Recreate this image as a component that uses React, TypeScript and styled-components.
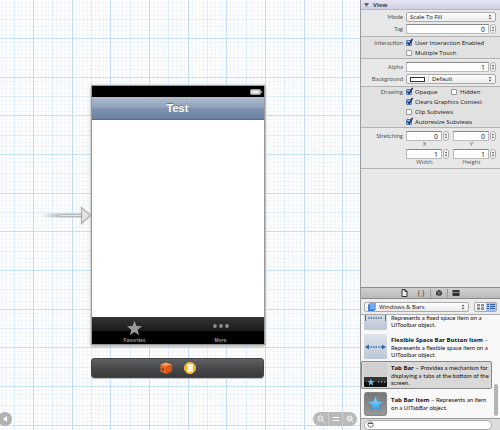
import React, { useState } from "react";
import styled, { createGlobalStyle, css } from "styled-components";

const Global = createGlobalStyle`
  * { box-sizing: border-box; }
  body { margin: 0; font-family: "Open Sans", "Noto Sans", sans-serif; font-size: 6px; line-height: 8px; color: #111; background: #fff; }
  button, input, select { font: inherit; color: inherit; margin: 0; padding: 0; border: 0; }
  p { margin: 0; }
`;

const TILE = 116;

/* Draws `count` evenly spread one-pixel lines across a tile, snapped to whole pixels. */
const rule = (direction: string, count: number, color: string) => {
  const stops: string[] = [];
  for (let i = 0; i < count; i += 1) {
    const at = Math.round((i * TILE) / count);
    const next = Math.round(((i + 1) * TILE) / count);
    stops.push(`${color} ${at}px ${at + 1}px`, `transparent ${at + 1}px ${next}px`);
  }
  return `linear-gradient(${direction}, ${stops.join(", ")})`;
};

const GRID = [
  rule("90deg", 3, "#c3dbf7"),
  rule("180deg", 3, "#c3e0f9"),
  rule("90deg", 6, "#dfebfb"),
  rule("180deg", 6, "#dff0fc"),
  rule("90deg", 30, "#f1f6fd"),
  rule("180deg", 30, "#f1f7fd"),
].join(", ");

const Window = styled.div`
  display: flex;
  height: 100vh;
  min-height: 430px;
  overflow: hidden;
`;

const Canvas = styled.main`
  position: relative;
  flex: 1;
  min-width: 0;
  display: flex;
  flex-direction: column;
  align-items: center;
  padding: 85px 5px 0 0;
  background-color: #fff;
  background-image: ${GRID};
  background-size: ${TILE}px ${TILE}px;
  background-position: 33px 38px;
`;

const DeviceRow = styled.div`
  position: relative;
`;

const Phone = styled.section`
  display: flex;
  flex-direction: column;
  width: 174px;
  border: 1px solid #999;
  background: #fff;
  box-shadow: 0 1px 3px #999;
`;

const StatusBar = styled.div`
  display: flex;
  justify-content: flex-end;
  align-items: center;
  height: 11px;
  padding-right: 2px;
  background: #000;
`;

const NavTitle = styled.h1`
  margin: 0;
  height: 23px;
  font: bold 11px/23px "Liberation Sans", Arial, sans-serif;
  text-align: center;
  color: #fff;
  text-shadow: 0 -1px 0 #64748c;
  background: linear-gradient(#b1bfd0, #8da0b9 50%, #8094b0 51%, #6b82a3);
  border-bottom: 1px solid #53698a;
`;

const Content = styled.div`
  height: 197px;
`;

const TabBar = styled.nav`
  display: flex;
  height: 27px;
  background: linear-gradient(#343434, #1b1b1b 50%, #000 51%);
`;

const Tab = styled.button`
  flex: 1;
  display: flex;
  flex-direction: column;
  align-items: center;
  justify-content: space-between;
  padding: 3px 0 0;
  font: bold 5px/8px "Liberation Sans", Arial, sans-serif;
  color: #999;
  background: none;
`;

const Dock = styled.div`
  display: flex;
  align-items: center;
  justify-content: center;
  gap: 10px;
  width: 173px;
  height: 20px;
  margin-top: 13px;
  border: 1px solid #444;
  border-radius: 3px;
  background: linear-gradient(#606163, #48494b 50%, #38393b);
  box-shadow: 0 1px 1px #bbb;
`;

const EntryArrow = styled.svg`
  position: absolute;
  right: 100%;
  top: 121px;
  margin-right: -1px;
`;

const ZoomControls = styled.div`
  position: absolute;
  right: 3px;
  bottom: 4px;
  display: flex;
  height: 14px;
  padding: 0 1px;
  border-radius: 7px;
  background: #b9b9b9;
`;

const ZoomButton = styled.button`
  display: grid;
  place-items: center;
  width: 14px;
  background: none;
  & + & { border-left: 1px solid #cbcbcb; }
`;

const BackButton = styled.button`
  position: absolute;
  left: -2px;
  bottom: 4px;
  display: grid;
  place-items: center;
  width: 14px;
  height: 14px;
  border-radius: 50%;
  background: #b2b2b2;
`;

const Sidebar = styled.aside`
  display: flex;
  flex-direction: column;
  width: 140px;
  border-left: 1px solid #999;
  background: #e8e8e8;
`;

const PanelHeader = styled.button`
  display: flex;
  align-items: center;
  gap: 4px;
  height: 10px;
  padding-left: 3px;
  font-weight: 700;
  color: #444;
  text-align: left;
  background: linear-gradient(#e6e6f4, #cfcfe3);
  border-bottom: 1px solid #b5b5c3;
`;

const Group = styled.div<{ $gap?: number; $pad?: string; $shade?: boolean }>`
  display: grid;
  grid-template-columns: 42px 1fr;
  column-gap: 3px;
  row-gap: ${(p) => p.$gap ?? 2}px;
  padding: ${(p) => p.$pad ?? "2px 4px 2px 0"};
  border-bottom: 1px solid #b2b2b2;
  background: ${(p) => (p.$shade ? "#e1e1e1" : "none")};
`;

const Label = styled.label`
  grid-column: 1;
  line-height: 10px;
  font-family: Lato, "Open Sans", sans-serif;
  color: #555;
  text-align: right;
`;

const Field = styled.div`
  grid-column: 2;
  display: flex;
  align-items: center;
  min-width: 0;
  height: 10px;
`;

const popupLook = css`
  border: 1px solid #aaa;
  border-radius: 2px;
  background: linear-gradient(#fff, #f4f4f4 50%, #ececec);
`;

const Popup = styled.div`
  ${popupLook}
  flex: 1;
  display: flex;
  align-items: center;
  gap: 3px;
  min-width: 0;
  height: 10px;
  padding: 0 3px;
`;

const Select = styled.select`
  flex: 1;
  min-width: 0;
  height: 8px;
  line-height: 8px;
  appearance: none;
  background: none;
  outline: none;
`;

const Swatch = styled.span`
  width: 15px;
  height: 5px;
  border: 1px solid #333;
  background: #fff;
`;

const Divider = styled.span`
  width: 1px;
  height: 6px;
  background: #ccc;
`;

const NumberBox = styled.input`
  flex: 1;
  min-width: 0;
  width: 10px;
  height: 10px;
  padding-right: 3px;
  font-size: 7px;
  color: #111;
  text-align: right;
  border: 1px solid #bbb;
  border-top-color: #888;
  background: #fff;
`;

const StepButton = styled.button`
  display: grid;
  place-items: center;
  width: 6px;
  height: 10px;
  margin-left: 1px;
  border: 1px solid #aaa;
  border-radius: 3px;
  background: #fff;
`;

const CheckLabel = styled.label`
  display: flex;
  align-items: center;
  gap: 3px;
  flex: 1;
  height: 10px;
  white-space: nowrap;
`;

const CheckBox = styled.input`
  appearance: none;
  width: 6px;
  height: 6px;
  border: 1px solid #999;
  border-radius: 1px;
  background: #fff;
  &:checked { border-color: #5578b8; background: #9cc3f3; }
`;

const CheckWrap = styled.span`
  position: relative;
  display: flex;
`;

const Tick = styled.svg`
  position: absolute;
  left: 0;
  top: -2px;
  pointer-events: none;
`;

const StretchGrid = styled.div`
  grid-column: 2;
  display: grid;
  grid-template-columns: 1fr 1fr;
  column-gap: 4px;
`;

const StretchCell = styled.label`
  display: flex;
  flex-direction: column;
  color: #555;
`;

const StretchCaption = styled.span`
  padding-right: 6px;
  height: 8px;
  line-height: 7px;
  text-align: center;
`;

const Spacer = styled.div`
  flex: 1;
`;

const LibraryTabs = styled.div`
  display: flex;
  align-items: center;
  justify-content: center;
  height: 12px;
  padding-right: 2px;
  border-top: 1px solid #8c8c8c;
  border-bottom: 1px solid #8c8c8c;
  background: linear-gradient(#d0d0d0, #b9b9b9);
`;

const LibraryTab = styled.button`
  display: grid;
  place-items: center;
  width: 17px;
  height: 9px;
  font-size: 7px;
  color: #333;
  background: none;
  & + & + & { border-left: 1px solid #999; }
`;

const LibraryBar = styled.div`
  display: flex;
  align-items: center;
  gap: 5px;
  height: 16px;
  padding: 0 3px;
  border-bottom: 1px solid #aaa;
  background: #ececec;
`;

const ViewToggle = styled.div`
  ${popupLook}
  display: flex;
  width: 23px;
  height: 10px;
`;

const ViewButton = styled.button<{ $on?: boolean }>`
  flex: 1;
  display: grid;
  place-items: center;
  background: ${(p) => (p.$on ? "#9fc3f5" : "none")};
`;

const LibraryList = styled.div`
  position: relative;
  display: flex;
  flex-direction: column;
  justify-content: flex-end;
  height: 103px;
  padding-right: 8px;
  overflow: hidden;
  background: #f8f8f8;
`;

const LibraryItem = styled.article<{ $on?: boolean }>`
  flex: none;
  display: flex;
  align-items: center;
  gap: 4px;
  height: ${(p) => (p.$on ? 28 : 29)}px;
  padding: 0 0 0 2px;
  border: 1px solid ${(p) => (p.$on ? "#888" : "transparent")};
  border-radius: 2px;
  background: ${(p) => (p.$on ? "#d9d9d9" : "none")};
`;

const ItemText = styled.p`
  flex: 1;
  min-width: 0;
  font-family: Lato, "Open Sans", sans-serif;
  line-height: 7px;
  white-space: nowrap;
`;

const ItemName = styled.b`
  font-family: "Open Sans", sans-serif;
`;

const ScrollThumb = styled.div`
  position: absolute;
  right: 2px;
  bottom: 2px;
  width: 4px;
  height: 32px;
  border-radius: 2px;
  background: #b5b5b5;
`;

const Footer = styled.div`
  display: flex;
  align-items: center;
  height: 12px;
  padding: 0 8px 0 3px;
  border-top: 1px solid #999;
  background: #dcdcdc;
`;

const Search = styled.div`
  flex: 1;
  display: flex;
  align-items: center;
  height: 10px;
  padding-left: 2px;
  border: 1px solid #aaa;
  border-radius: 5px;
  background: #fff;
`;

const SearchInput = styled.input`
  flex: 1;
  min-width: 0;
  height: 8px;
  background: none;
  outline: none;
`;

const STAR = "M12 1l2.8 7.6 8.2.3-6.5 5 2.3 7.9L12 17.2l-6.8 4.6 2.3-7.9-6.5-5 8.2-.3z";

const Arrows = () => (
  <svg width="4" height="6" viewBox="0 0 4 6"><path d="M.7 2.3L2 .5l1.3 1.8zM.7 3.7L2 5.5l1.3-1.8z" fill="#444" /></svg>
);

function NumberField({ id, initial, label }: { id: string; initial: string; label: string }) {
  const [value, setValue] = useState(initial);
  return (
    <Field>
      <NumberBox id={id} aria-label={label} value={value} onChange={(e) => setValue(e.target.value)} />
      <StepButton aria-label={`Step ${label}`} onClick={() => setValue(String(Number(value) + 1))}><Arrows /></StepButton>
    </Field>
  );
}

function Check({ children, on }: { children: string; on?: boolean }) {
  const [checked, setChecked] = useState(!!on);
  return (
    <CheckLabel>
      <CheckWrap>
        <CheckBox type="checkbox" checked={checked} onChange={() => setChecked(!checked)} />
        {checked && <Tick width="8" height="8" viewBox="0 0 8 8"><path d="M1.4 4.4l1.8 2L6.6.9" fill="none" stroke="#16264f" strokeWidth="1.4" /></Tick>}
      </CheckWrap>
      {children}
    </CheckLabel>
  );
}

const SpaceIcon = ({ fixed }: { fixed?: boolean }) => (
  <svg width="23" height="25" viewBox="0 0 23 25">
    <defs><linearGradient id="space" x2="0" y2="1"><stop stopColor="#dde2e9" /><stop offset="1" stopColor="#bdc8d6" /></linearGradient></defs>
    <rect width="23" height="25" rx="1" fill="url(#space)" />
    <path d="M4 13h15" stroke="#4375ad" strokeWidth="1.5" strokeDasharray="1.5 1" />
    {fixed ? <path d="M1.5 10v6M21.5 10v6" stroke="#4375ad" /> : <path d="M1 13l4-2.5v5zM22 13l-4-2.5v5z" fill="#356aa5" />}
  </svg>
);

const TabBarIcon = () => (
  <svg width="23" height="24" viewBox="0 0 23 24">
    <rect width="23" height="24" rx="1" fill="#d0d0d0" />
    <path d="M0 14h23v9q0 1-1 1H1q-1 0-1-1z" fill="#111" />
    <path d="M0 14h23v5H0z" fill="#333" />
    <path d={STAR} transform="translate(3 15.2) scale(.33)" fill="#62bdf5" />
    <path d="M14 19h1.5M17 19h1.5M20 19h1.5" stroke="#888" strokeWidth="1.5" />
  </svg>
);

const StarIcon = () => (
  <svg width="23" height="24" viewBox="0 0 23 24">
    <defs>
      <linearGradient id="tile" x2="0" y2="1"><stop stopColor="#777" /><stop offset="1" stopColor="#999" /></linearGradient>
      <linearGradient id="blue" x2="0" y2="1"><stop stopColor="#a4e4ff" /><stop offset="1" stopColor="#2898f0" /></linearGradient>
    </defs>
    <rect x=".5" y=".5" width="22" height="23" rx="2" fill="url(#tile)" stroke="#888" />
    <path d={STAR} transform="translate(3.1 3.6) scale(.7)" fill="url(#blue)" stroke="#3a8fd0" strokeWidth=".7" />
  </svg>
);

export default function App() {
  return (
    <>
      <Global />
      <Window>
        <Canvas>
          <DeviceRow>
            <Phone>
              <StatusBar>
                <svg width="12" height="6" viewBox="0 0 12 6"><rect x=".5" y=".5" width="10" height="5" rx="1" fill="#ccc" stroke="#999" /><path d="M2.5 3h6" stroke="#eee" strokeWidth="2" /><path d="M11 2h1v2h-1z" fill="#999" /></svg>
              </StatusBar>
              <NavTitle>Test</NavTitle>
              <Content />
              <TabBar>
                <Tab>
                  <svg width="17" height="16" viewBox="0 0 24 23"><path d={STAR} fill="#9a9a9a" /></svg>
                  Favorites
                </Tab>
                <Tab>
                  <svg width="18" height="16" viewBox="0 0 18 16"><g fill="#8c8c8c"><circle cx="3" cy="6" r="1.9" /><circle cx="9" cy="6" r="1.9" /><circle cx="15" cy="6" r="1.9" /></g></svg>
                  More
                </Tab>
              </TabBar>
            </Phone>
            <EntryArrow width="52" height="20" viewBox="0 0 52 20">
              <defs><linearGradient id="shaft"><stop stopColor="#bbb" stopOpacity="0" /><stop offset=".5" stopColor="#b8b8b8" /></linearGradient></defs>
              <rect y="7.5" width="42" height="4" fill="url(#shaft)" />
              <path d="M20 9.5h21" stroke="#e6e6e6" />
              <path d="M41.5 1.5v16l9-8z" fill="#e4e4e4" stroke="#b0b0b0" strokeWidth="1.3" />
            </EntryArrow>
          </DeviceRow>
          <Dock>
            <svg width="14" height="14" viewBox="0 0 14 14"><path d="M1.500 3.500L7 1.500l5.500 2v7L7 12.800l-5.500-2.300z" fill="#e96a20" /><path d="M1.500 3.500L7 1.500l5.500 2L7 5.300z" fill="#f8a063" /><path d="M7 5.300l5.500-1.800v7L7 12.800z" fill="#d9581a" /><path d="M2.500 7.500l2.500-1v4l-2.500-1z" fill="#b23a14" /></svg>
            <svg width="14" height="14" viewBox="0 0 14 14"><circle cx="7" cy="7" r="5.5" fill="#f6a916" stroke="#ffc53a" /><rect x="4" y="3" width="6" height="8" rx="1" fill="#fff3d8" /></svg>
          </Dock>
          <BackButton aria-label="Show outline"><svg width="6" height="6" viewBox="0 0 6 6"><path d="M5 0v6L1 3z" fill="#fff" /></svg></BackButton>
          <ZoomControls>
            <ZoomButton aria-label="Zoom out"><svg width="8" height="8" viewBox="0 0 8 8" fill="none" stroke="#fff"><circle cx="3.5" cy="3.5" r="2.5" /><path d="M5.5 5.5l2 2M2.5 3.5h2" /></svg></ZoomButton>
            <ZoomButton aria-label="Actual size"><svg width="8" height="8" viewBox="0 0 8 8" stroke="#fff"><path d="M1 2.5h6M1 5.5h6" /></svg></ZoomButton>
            <ZoomButton aria-label="Zoom in"><svg width="8" height="8" viewBox="0 0 8 8" fill="none" stroke="#fff"><circle cx="3.5" cy="3.5" r="2.5" /><path d="M5.5 5.5l2 2M2.5 3.5h2M3.5 2.5v2" /></svg></ZoomButton>
          </ZoomControls>
        </Canvas>
        <Sidebar>
          <PanelHeader><svg width="5" height="4" viewBox="0 0 5 4"><path d="M0 0h5L2.5 4z" fill="#666" /></svg>View</PanelHeader>
          <Group>
            <Label htmlFor="mode">Mode</Label>
            <Field><Popup><Select id="mode"><option>Scale To Fill</option></Select><Arrows /></Popup></Field>
            <Label htmlFor="tag">Tag</Label>
            <NumberField id="tag" initial="0" label="Tag" />
          </Group>
          <Group $gap={0} $pad="1px 4px 0 0" $shade>
            <Label as="span">Interaction</Label>
            <Field><Check on>User Interaction Enabled</Check></Field>
            <Field><Check>Multiple Touch</Check></Field>
          </Group>
          <Group $pad="3px 4px 2px 0">
            <Label htmlFor="alpha">Alpha</Label>
            <NumberField id="alpha" initial="1" label="Alpha" />
            <Label htmlFor="background">Background</Label>
            <Field><Popup><Swatch /><Divider /><Select id="background"><option>Default</option></Select><Arrows /></Popup></Field>
          </Group>
          <Group $gap={0} $pad="0 4px 0 0" $shade>
            <Label as="span">Drawing</Label>
            <Field><Check on>Opaque</Check><Check>Hidden</Check></Field>
            <Field><Check on>Clears Graphics Context</Check></Field>
            <Field><Check>Clip Subviews</Check></Field>
            <Field><Check on>Autoresize Subviews</Check></Field>
          </Group>
          <Group $pad="3px 4px 1px 0">
            <Label as="span">Stretching</Label>
            <StretchGrid>
              <StretchCell><NumberField id="x" initial="0" label="X" /><StretchCaption>X</StretchCaption></StretchCell>
              <StretchCell><NumberField id="y" initial="0" label="Y" /><StretchCaption>Y</StretchCaption></StretchCell>
              <StretchCell><NumberField id="w" initial="1" label="Width" /><StretchCaption>Width</StretchCaption></StretchCell>
              <StretchCell><NumberField id="h" initial="1" label="Height" /><StretchCaption>Height</StretchCaption></StretchCell>
            </StretchGrid>
          </Group>
          <Spacer />
          <LibraryTabs>
            <LibraryTab aria-label="Files"><svg width="7" height="8" viewBox="0 0 7 8"><path d="M1 .5h3l2 2v5H1zM4 .5v2h2" fill="#eee" stroke="#333" /></svg></LibraryTab>
            <LibraryTab aria-label="Snippets">{"{ }"}</LibraryTab>
            <LibraryTab aria-label="Objects"><svg width="8" height="8" viewBox="0 0 8 8"><path d="M4 .8l3 1.5v3.5L4 7.3 1 5.8V2.3z" fill="#444" /><path d="M1 2.3l3 1.4 3-1.4M4 3.7v3.5" stroke="#999" strokeWidth=".6" fill="none" /></svg></LibraryTab>
            <LibraryTab aria-label="Media"><svg width="8" height="8" viewBox="0 0 8 8"><rect x=".5" y="1" width="7" height="6" fill="#333" /><path d="M1 3.5h6" stroke="#aaa" strokeWidth=".7" /></svg></LibraryTab>
          </LibraryTabs>
          <LibraryBar>
            <Popup>
              <svg width="8" height="8" viewBox="0 0 8 8"><path d="M0 2l2-2h6v6L6 8H0z" fill="#3c7fde" /><path d="M2 0h6v6H2z" fill="#75a9f0" /></svg>
              <Select aria-label="Library"><option>Windows &amp; Bars</option></Select><Arrows />
            </Popup>
            <ViewToggle>
              <ViewButton aria-label="Icons"><svg width="7" height="6" viewBox="0 0 7 6" fill="none" stroke="#555" strokeWidth=".8"><path d="M.5.5h2v1.5h-2zM4.5.5h2v1.5h-2zM.5 3.8h2v1.5h-2zM4.5 3.8h2v1.5h-2z" /></svg></ViewButton>
              <ViewButton $on aria-label="List"><svg width="8" height="6" viewBox="0 0 8 6" stroke="#345fa6"><path d="M0 .5h2M3 .5h5M0 2.5h2M3 2.5h5M0 4.5h2M3 4.5h5" /></svg></ViewButton>
            </ViewToggle>
          </LibraryBar>
          <LibraryList>
            <LibraryItem><SpaceIcon fixed /><ItemText><br />Represents a fixed space item on a<br />UIToolbar object.</ItemText></LibraryItem>
            <LibraryItem><SpaceIcon /><ItemText><ItemName>Flexible Space Bar Button Item</ItemName> –<br />Represents a flexible space item on a<br />UIToolbar object.</ItemText></LibraryItem>
            <LibraryItem $on><TabBarIcon /><ItemText><ItemName>Tab Bar</ItemName> – Provides a mechanism for<br />displaying a tabs at the bottom of the<br />screen.</ItemText></LibraryItem>
            <LibraryItem><StarIcon /><ItemText><ItemName>Tab Bar Item</ItemName> – Represents an item<br />on a UITabBar object.</ItemText></LibraryItem>
            <ScrollThumb />
          </LibraryList>
          <Footer>
            <Search><svg width="7" height="7" viewBox="0 0 7 7"><circle cx="3.5" cy="3.5" r="2.7" fill="#fff" stroke="#777" /><path d="M1 2.5h5" stroke="#555" /></svg><SearchInput type="search" aria-label="Filter library" /></Search>
          </Footer>
        </Sidebar>
      </Window>
    </>
  );
}
